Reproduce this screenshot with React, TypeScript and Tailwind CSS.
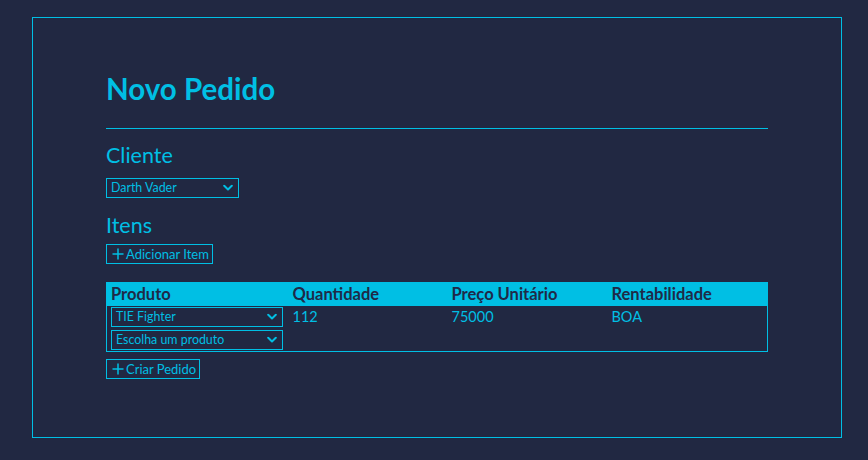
import React from "react";

const C = "#00bfe4";

function Chevron() {
  return (
    <svg width="10" height="7" viewBox="0 0 10 7" className="pointer-events-none absolute right-[5px] top-1/2 -translate-y-1/2">
      <path d="M1.2 1.3 L5 5 L8.8 1.3" fill="none" stroke={C} strokeWidth="2" strokeLinecap="round" strokeLinejoin="round" />
    </svg>
  );
}

function Select({ value, width }: { value: string; width: string }) {
  return (
    <div className={`relative ${width} h-[20px] border border-[#00bfe4]`}>
      <div className="pl-[4px] text-[12.4px] leading-[18px] text-[#00bfe4]">{value}</div>
      <Chevron />
    </div>
  );
}

function Plus() {
  return (
    <svg width="12" height="12" viewBox="0 0 12 12" className="shrink-0">
      <path d="M6 0.5 V11.5 M0.5 6 H11.5" stroke={C} strokeWidth="1.5" />
    </svg>
  );
}

function Btn({ label }: { label: string }) {
  return (
    <div className="inline-flex h-[20px] items-center gap-[2px] border border-[#00bfe4] pl-[5px] pr-[3px] text-[13px] leading-[18px] text-[#00bfe4]">
      <Plus />
      <span>{label}</span>
    </div>
  );
}

export default function App() {
  return (
    <div className="min-h-[460px] bg-[#212842] pl-[32px] pt-[17px]" style={{ fontFamily: "Lato, 'Noto Sans', sans-serif" }}>
      <div className="h-[421px] w-[810px] border border-[#00bfe4] px-[73px]">
        <h1 className="mt-[53px] text-[29.5px] font-bold leading-[36px] text-[#00bfe4]">Novo Pedido</h1>
        <div className="mt-[21px] h-px bg-[#00bfe4]" />
        <h2 className="mt-[13px] text-[21.5px] leading-[26px] text-[#00bfe4]">Cliente</h2>
        <div className="mt-[10px]">
          <Select value="Darth Vader" width="w-[133px]" />
        </div>
        <h2 className="mt-[14px] text-[21.5px] leading-[26px] text-[#00bfe4]">Itens</h2>
        <div className="mt-[4px]">
          <Btn label="Adicionar Item" />
        </div>
        <table className="mt-[16px] w-full border-collapse border border-[#00bfe4] text-left">
          <thead>
            <tr className="bg-[#00bfe4] text-[16.5px] font-bold leading-[23px] text-[#1f2a48]">
              <th className="w-[181px] pl-[4px] font-bold">Produto</th>
              <th className="w-[159px] pl-[5px] font-bold">Quantidade</th>
              <th className="w-[160px] pl-[5px] font-bold">Preço Unitário</th>
              <th className="pl-[5px] font-bold">Rentabilidade</th>
            </tr>
          </thead>
          <tbody className="text-[14.5px] leading-[20px] text-[#00bfe4]">
            <tr className="align-top">
              <td className="pl-[4px] pt-[1px]">
                <Select value="TIE Fighter" width="w-[172px]" />
              </td>
              <td className="pl-[5px] pt-[1px]">112</td>
              <td className="pl-[5px] pt-[1px]">75000</td>
              <td className="pl-[5px] pt-[1px]">BOA</td>
            </tr>
            <tr className="align-top">
              <td className="pl-[4px] pb-[1px] pt-[3px]">
                <Select value="Escolha um produto" width="w-[172px]" />
              </td>
              <td />
              <td />
              <td />
            </tr>
          </tbody>
        </table>
        <div className="mt-[5px]">
          <Btn label="Criar Pedido" />
        </div>
      </div>
    </div>
  );
}
